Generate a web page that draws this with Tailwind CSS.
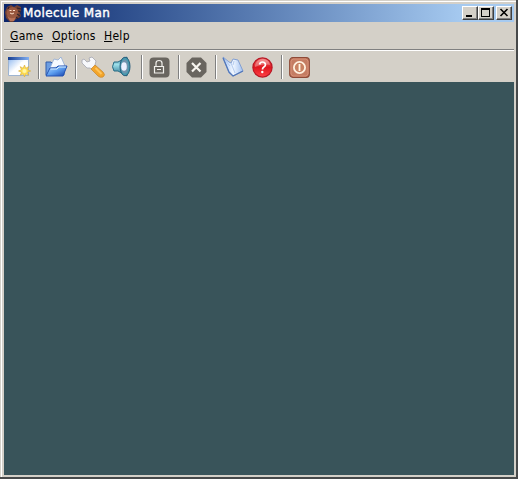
<!DOCTYPE html>
<html lang="en">
<head>
<meta charset="utf-8">
<title>Molecule Man</title>
<script src="https://cdn.jsdelivr.net/npm/@tailwindcss/browser@4"></script>
</head>
<body class="overflow-hidden bg-[#d4d0c8] font-['DejaVu_Sans_Condensed','DejaVu_Sans',sans-serif] text-black">
<div class="h-[479px] w-[518px] border-r-2 border-b-2 border-[#47494a]">
<div class="flex h-[477px] w-[516px] flex-col border-t border-l border-t-[#d4d0c8] border-l-[#d4d0c8] bg-[#d4d0c8]">
<div class="flex h-[476px] flex-col border-t border-l border-white pt-[2px] pr-[2px] pb-[2px] pl-[2px]">
  <header class="flex h-[18px] shrink-0 items-center bg-linear-to-r from-[#0a246a] to-[#a6caf0] to-90% pr-[2px]">
    <svg class="ml-px h-[17px] w-[17px] shrink-0" viewBox="0 0 17 17">
      <path d="M2 2l4-2 3 2 3-2 4 2v3l-1 3 1 3-2 2-3 1-3 3H5l-4-4-1-6z" fill="#704033"/>
      <circle cx="7.500" cy="8" r="6" fill="#99583f"/>
      <path d="M2 11q4 4 9 1l-2 4H5z" fill="#b8735a"/>
      <path d="M12 3l4 1M13 6l3 1M12 9l3 2M3 4l1-2M11 12l2 2" stroke="#33252d" stroke-width="1.1"/>
      <path d="M4.500 5.500h2M8 5.500h2M5 8l2 1 2-1" stroke="#ffe0cb" fill="none"/>
    </svg>
    <span class="ml-px inline-block h-[18px] font-['DejaVu_Sans'] text-[12px] leading-[18px] tracking-[0.4px] whitespace-nowrap text-white [-webkit-text-stroke:0.4px_white]">Molecule Man</span>
    <div class="ml-auto flex">
      <button aria-label="Minimize" class="flex h-[14px] w-4 border border-t-white border-r-[#404040] border-b-[#404040] border-l-white bg-[#d4d0c8] shadow-[inset_-1px_-1px_#808080]"><svg class="h-3 w-[14px]" viewBox="0 0 14 12"><path d="M3 8h6v2H3z"/></svg></button>
      <button aria-label="Maximize" class="flex h-[14px] w-4 border border-t-white border-r-[#404040] border-b-[#404040] border-l-white bg-[#d4d0c8] shadow-[inset_-1px_-1px_#808080]"><svg class="h-3 w-[14px]" viewBox="0 0 14 12"><path fill-rule="evenodd" d="M2 1h9v9H2zM3 3v6h7V3z"/></svg></button>
      <button aria-label="Close" class="ml-[2px] flex h-[14px] w-4 border border-t-white border-r-[#404040] border-b-[#404040] border-l-white bg-[#d4d0c8] shadow-[inset_-1px_-1px_#808080]"><svg class="h-3 w-[14px]" viewBox="0 0 14 12"><path d="M3.500 2l7 7M10.500 2l-7 7" stroke="#000" stroke-width="1.6"/></svg></button>
    </div>
  </header>
  <nav class="flex h-[27px] shrink-0 items-center pt-[2px] pl-[6px] text-[12px] leading-[25px] tracking-[0.3px] whitespace-nowrap">
    <span class="w-[42px]"><u class="underline-offset-1">G</u>ame</span>
    <span class="w-[52px]"><u class="underline-offset-1">O</u>ptions</span>
    <span><u class="underline-offset-1">H</u>elp</span>
  </nav>
  <div class="flex h-[33px] shrink-0 items-center border-t border-[#808080] pt-[2px] shadow-[inset_0_1px_white]">
    <svg class="ml-1 h-[22px] w-[23px] shrink-0" viewBox="0 0 23 22">
      <defs><linearGradient id="win"><stop stop-color="#173e91"/><stop offset="1" stop-color="#82aff1"/></linearGradient><linearGradient id="page" x2="1" y2="1"><stop stop-color="#8ab5ef"/><stop offset=".5" stop-color="#fff"/><stop offset="1" stop-color="#d9e4f6"/></linearGradient></defs>
      <path d="M.5 1.500h20v18H.5z" fill="url(#page)" stroke="#9eb4d0"/><path d="M0 1h21v3H0z" fill="url(#win)"/><path d="M1 18C8 17 11 11 13 6h7v13H1z" fill="#fff"/>
      <path d="M16.500 9l1.200 3.200 3-1.500-1.300 3 3.300 1.300-3.300 1.200 1.300 3-3-1.300-1.200 3-1.300-3-3 1.300 1.300-3-3-1.200 3-1.300-1.300-3 3 1.500z" fill="#ffdf52" stroke="#d6a836" stroke-width=".6"/><circle cx="16.500" cy="15" r="2" fill="#fff5a4"/>
    </svg>
    <i class="ml-[7px] h-6 w-[2px] border-r border-l border-r-white border-l-[#808080]"></i>
    <svg class="ml-[4px] h-[22px] w-[25px] shrink-0" viewBox="0 0 25 22">
      <defs><linearGradient id="folder" x2="1" y2="1"><stop stop-color="#b8dcff"/><stop offset=".5" stop-color="#5c9def"/><stop offset="1" stop-color="#123eaa"/></linearGradient></defs>
      <path d="M2 19V6h5l2 2h11v11z" fill="#6c9de1" stroke="#315da9"/>
      <path d="M6 12L10 3l4 1 3-3 4 9z" fill="#f6faff" stroke="#91abd3" stroke-width=".8"/>
      <path d="M2 20l4-8h6l2-2h9l-4 10z" fill="url(#folder)" stroke="#2453b3"/><path d="M6.500 13H13l2-2h7" stroke="#d8efff" fill="none"/>
    </svg>
    <i class="ml-[6px] h-6 w-[2px] border-r border-l border-r-white border-l-[#808080]"></i>
    <svg class="ml-1 h-[22px] w-[25px] shrink-0" viewBox="0 0 25 22">
      <path d="M1 4l2-1 3 3 3-1-1-3 3-1 4 4-1 4 2 2-4 3-3-2H6L1 7z" fill="#f7f8fb" stroke="#a5a6b1" stroke-width=".8"/>
      <path d="M10 13l4-4 8 7q3 3 0 5-3 1-5-1z" fill="#f3a52a" stroke="#c98a32" stroke-width=".8"/><path d="M14.500 12l6 6" stroke="#ffc45a" stroke-width="2"/>
    </svg>
    <svg class="ml-[6px] h-[22px] w-[21px] shrink-0" viewBox="0 0 21 22">
      <defs><linearGradient id="horn" x2="0" y2="1"><stop stop-color="#347b9a"/><stop offset=".4" stop-color="#9de0ea"/><stop offset="1" stop-color="#1c6686"/></linearGradient></defs>
      <path d="M2 6h4l9-5v19L6 15H2Q-1 11 2 6z" fill="url(#horn)" stroke="#286b83"/>
      <ellipse cx="13" cy="10.500" rx="5" ry="9.300" fill="#479bb0" stroke="#285d7c"/><ellipse cx="12.800" cy="10.500" rx="3.600" ry="7" fill="#7193ad"/><ellipse cx="12" cy="10.500" rx="2.800" ry="4.300" fill="#edf0ff"/>
    </svg>
    <i class="ml-[8px] h-6 w-[2px] border-r border-l border-r-white border-l-[#808080]"></i>
    <svg class="ml-[6px] h-[21px] w-[21px] shrink-0" viewBox="0 0 21 21">
      <rect x=".5" y=".5" width="20" height="20" rx="4" fill="#69655f"/><path d="M5.500 9.500h9v6.500h-9zM7 9V6q0-2.500 3-2.500t3 2.500v3M8 12.500h4" stroke="#f2f0ec" stroke-width="1.200" fill="none"/>
    </svg>
    <i class="ml-[8px] h-6 w-[2px] border-r border-l border-r-white border-l-[#808080]"></i>
    <svg class="ml-[6px] h-[21px] w-[21px] shrink-0" viewBox="0 0 21 21">
      <path d="M6 .5h9L20.500 6v9L15 20.500H6L.5 15V6z" fill="#69655f"/><path d="M6 6l8.500 8.500M14.500 6L6 14.500" stroke="#f7f4ef" stroke-width="2.200"/>
    </svg>
    <i class="ml-[8px] h-6 w-[2px] border-r border-l border-r-white border-l-[#808080]"></i>
    <svg class="ml-[5px] h-[22px] w-[23px] shrink-0" viewBox="0 0 23 22">
      <defs><linearGradient id="book"><stop stop-color="#a9c7f6"/><stop offset=".5" stop-color="#f1f7ff"/><stop offset="1" stop-color="#a1c0f0"/></linearGradient></defs>
      <path d="M1 1l6 5 2 1 2-4 5 1 5 11-10 5-4-3z" fill="url(#book)" stroke="#829fd2"/>
      <path d="M1 2l6 14 4 4 10-5" fill="none" stroke="#5277b9" stroke-width="1.300"/><path d="M9 7l4 10M12 5l-1 4M3 4l5 6" stroke="#b4cbef" fill="none"/>
    </svg>
    <svg class="ml-[7px] h-[21px] w-[21px] shrink-0" viewBox="0 0 21 21">
      <defs><linearGradient id="help" x2="0" y2="1"><stop stop-color="#f06c6c"/><stop offset=".5" stop-color="#df1820"/><stop offset="1" stop-color="#ff4147"/></linearGradient></defs>
      <circle cx="10.500" cy="10.500" r="9.600" fill="url(#help)" stroke="#b91724" stroke-width="1.200"/><path d="M3 8Q5 2 11 2t7 6q-7-2-15 2" fill="#fff" opacity=".3"/>
      <path d="M7.500 7.500Q8 5 10.500 5t3 2.500q0 1.500-1.600 2.500t-1.400 2.500" fill="none" stroke="#fff" stroke-width="1.700"/><circle cx="10.300" cy="15" r="1.200" fill="#fff"/>
    </svg>
    <i class="ml-[8px] h-6 w-[2px] border-r border-l border-r-white border-l-[#808080]"></i>
    <svg class="ml-[6px] h-[21px] w-[21px] shrink-0" viewBox="0 0 21 21">
      <rect x=".7" y=".7" width="19.600" height="19.600" rx="3" fill="#c47c62" stroke="#8e4a37" stroke-width="1.200"/><path d="M2 4l2-2h13l2 2v13l-2 2H4l-2-2z" fill="none" stroke="#d78f76"/><circle cx="10.500" cy="10.500" r="5.600" fill="#c98262" stroke="#fff0df" stroke-width="1.800"/><path d="M10.500 7v7" stroke="#fff5e5" stroke-width="1.800"/>
    </svg>
  </div>
  <main class="flex-1 bg-[#39545a]"></main>
</div>
</div>
</div>
</body>
</html>
